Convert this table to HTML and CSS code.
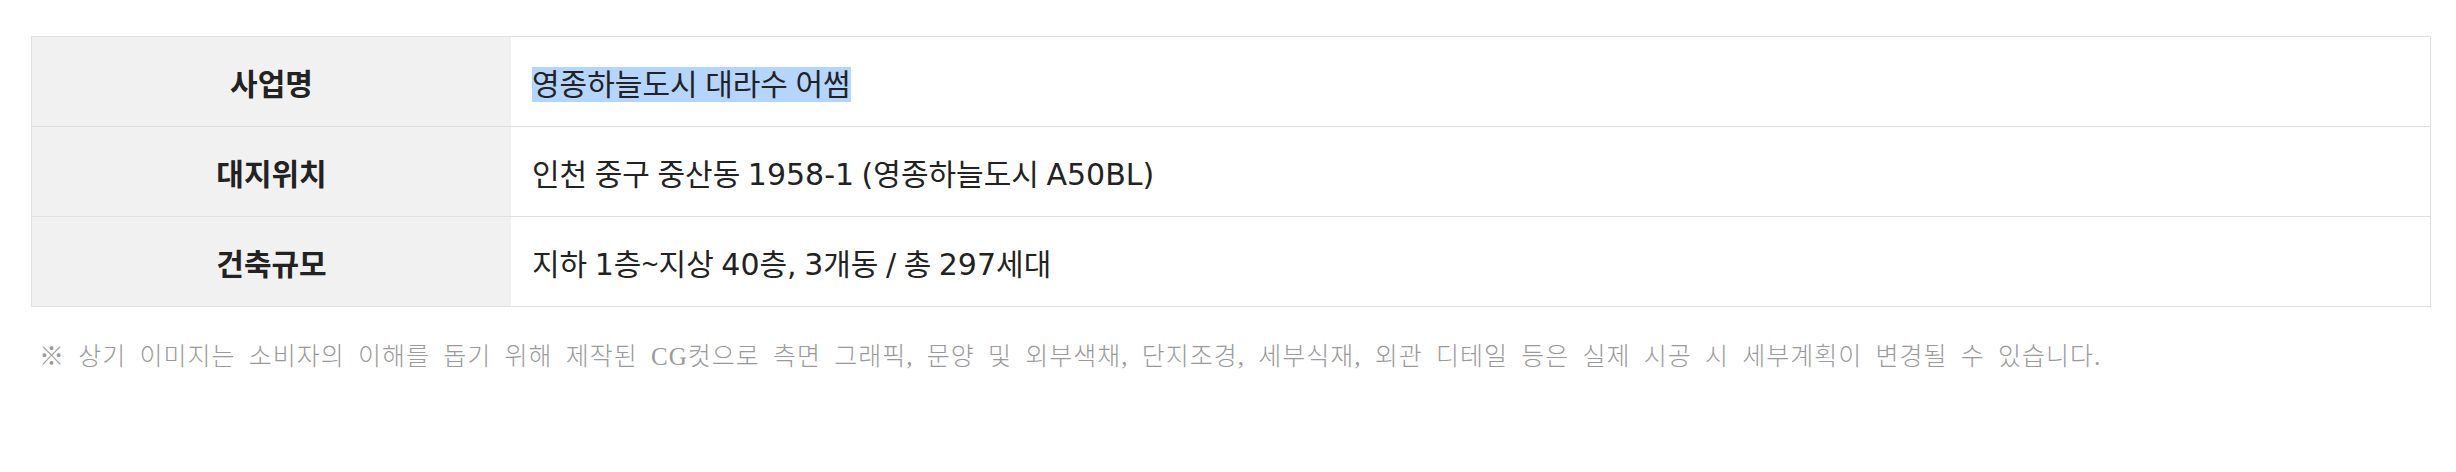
FILE: index.html
```html
<!DOCTYPE html>
<html lang="ko">
<head>
<meta charset="utf-8">
<title>사업개요</title>
<link rel="stylesheet" href="styles.css">
</head>
<body>
<div class="wrap">
  <table class="info">
    <tbody>
      <tr>
        <th>사업명</th>
        <td><span class="sel">영종하늘도시 대라수 어썸</span></td>
      </tr>
      <tr>
        <th>대지위치</th>
        <td>인천 중구 중산동 1958-1 (영종하늘도시 A50BL)</td>
      </tr>
      <tr>
        <th>건축규모</th>
        <td>지하 1층<span class="tilde">~</span>지상 40층, 3개동 / 총 297세대</td>
      </tr>
    </tbody>
  </table>
  <p class="note">※ 상기 이미지는 소비자의 이해를 돕기 위해 제작된 CG컷으로 측면 그래픽, 문양 및 외부색채, 단지조경, 세부식재, 외관 디테일 등은 실제 시공 시 세부계획이 변경될 수 있습니다.</p>
</div>
</body>
</html>
```

FILE: styles.css
```css
html, body {
  margin: 0;
  padding: 0;
  background: #ffffff;
}

.wrap {
  padding: 36px 0 0 31px;
}

.info {
  width: 2400px;
  border-collapse: collapse;
  border: 1px solid #dde1e5;
  font-family: "DejaVu Sans", "Noto Sans CJK KR", sans-serif;
}

.info tr {
  height: 90px;
}

.info th,
.info td {
  border-top: 1px solid #dde1e5;
  padding: 0;
  vertical-align: middle;
}

.info th {
  width: 479px;
  background: #f1f1f1;
  color: #222222;
  font-family: "Noto Sans CJK KR", sans-serif;
  font-size: 30px;
  font-weight: 700;
  text-align: center;
}

.info td {
  background: #ffffff;
  color: #222222;
  font-size: 30px;
  font-weight: 400;
  text-align: left;
  padding-left: 21px;
  word-spacing: -2px;
}

.tilde {
  font-family: "Open Sans", sans-serif;
}

.sel {
  background: #b4d5fe;
}

.note {
  margin: 32px 0 0 8px;
  font-family: "Liberation Serif", "Noto Sans CJK KR", serif;
  font-size: 25px;
  line-height: 36px;
  font-weight: 300;
  color: #9a9a9a;
  letter-spacing: 1px;
  word-spacing: 6px;
}
```
